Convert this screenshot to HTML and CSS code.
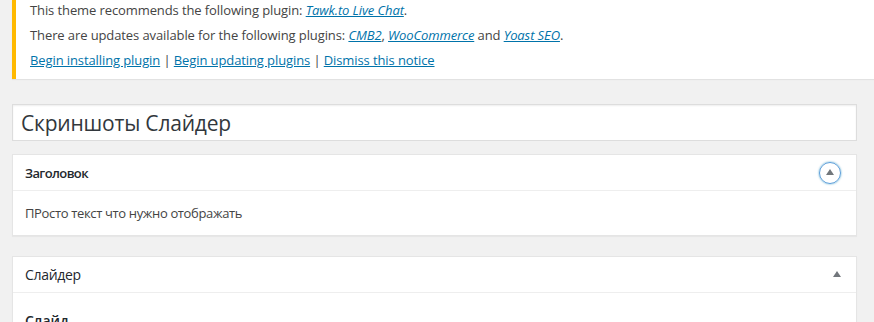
FILE: index.html
```html
<!DOCTYPE html>
<html lang="ru">
<head>
    <meta charset="UTF-8">
    <title>Скриншоты Слайдер</title>
    <link rel="stylesheet" href="styles.css">
</head>
<body>
    <div class="notice notice-warning">
        <p>This theme recommends the following plugin: <a href="#"><em>Tawk.to Live Chat</em></a>.</p>
        <p>There are updates available for the following plugins: <a href="#"><em>CMB2</em></a>, <a href="#"><em>WooCommerce</em></a> and <a href="#"><em>Yoast SEO</em></a>.</p>
        <p><a href="#">Begin installing plugin</a> | <a href="#">Begin updating plugins</a> | <a href="#">Dismiss this notice</a></p>
    </div>

    <div class="post-body">
        <div class="titlewrap">
            <input type="text" class="title-input" value="Скриншоты Слайдер">
        </div>

        <!-- Заголовок -->
        <div class="postbox">
            <div class="postbox-head">
                <h2 class="hndle bold">Заголовок</h2>
                <button class="handlediv focused" type="button"><span class="toggle-indicator"></span></button>
            </div>
            <div class="inside">
                <p>ПРосто текст что нужно отображать</p>
            </div>
        </div>

        <!-- Слайдер -->
        <div class="postbox">
            <div class="postbox-head">
                <h2 class="hndle">Слайдер</h2>
                <button class="handlediv" type="button"><span class="toggle-indicator"></span></button>
            </div>
            <div class="inside">
                <h3 class="field-title">Слайд</h3>
            </div>
        </div>
    </div>
</body>
</html>
```

FILE: styles.css
```css
body {
    background: #f1f1f1;
    color: #444;
    font-family: "Open Sans", "Noto Sans", sans-serif;
    font-size: 13px;
    margin: 0;
    overflow: hidden;
}
a {
    color: #0073aa;
}
.notice {
    background: #fff;
    border-left: 4px solid #ffb900;
    box-shadow: 0 1px 1px rgba(0,0,0,0.06);
    margin-left: 12px;
    padding: 0 14px 9px 14px;
}
.notice p {
    margin: 0;
    line-height: 20px;
    padding-top: 5px;
    letter-spacing: -0.1px;
}
.notice p:first-child {
    padding-top: 0;
}
.post-body {
    width: 845px;
    margin: 25px 0 0 12px;
}
.titlewrap {
    margin-bottom: 13px;
}
.title-input {
    display: block;
    box-sizing: border-box;
    width: 100%;
    height: 37px;
    margin: 0;
    padding: 3px 8px 2px;
    border: 1px solid #ddd;
    box-shadow: inset 0 1px 2px rgba(0,0,0,0.07);
    background: #fff;
    color: #32373c;
    font-family: "Open Sans", "Noto Sans", sans-serif;
    font-size: 21px;
    letter-spacing: -0.2px;
    outline: none;
}
.postbox {
    background: #fff;
    border: 1px solid #e5e5e5;
    box-shadow: 0 1px 1px rgba(0,0,0,0.04);
    margin-bottom: 20px;
}
.postbox-head {
    display: flex;
    align-items: center;
    justify-content: space-between;
    height: 35px;
    border-bottom: 1px solid #eee;
    padding: 0 14px 0 12px;
}
.hndle {
    margin: 0;
    font-size: 14px;
    font-weight: 400;
    color: #23282d;
    letter-spacing: -0.3px;
}
.hndle.bold {
    font-size: 13px;
    font-weight: 600;
    letter-spacing: -0.6px;
}
.handlediv {
    width: 22px;
    height: 22px;
    padding: 0;
    margin: 0 -6px 0 0;
    border: 1px solid transparent;
    border-radius: 50%;
    background: none;
    display: flex;
    align-items: center;
    justify-content: center;
}
.handlediv.focused {
    border-color: #5b9dd9;
    box-shadow: 0 0 2px rgba(30,140,190,0.8);
    margin-right: 1px;
}
.toggle-indicator {
    width: 0;
    height: 0;
    border-left: 4.5px solid transparent;
    border-right: 4.5px solid transparent;
    border-bottom: 6px solid #72777c;
    margin-top: -1px;
}
.inside {
    padding: 12px;
}
.inside p {
    margin: 0;
    line-height: 20px;
    letter-spacing: -0.35px;
}
.field-title {
    margin: 6px 0 0;
    font-size: 14px;
    font-weight: 600;
    color: #23282d;
}
```
